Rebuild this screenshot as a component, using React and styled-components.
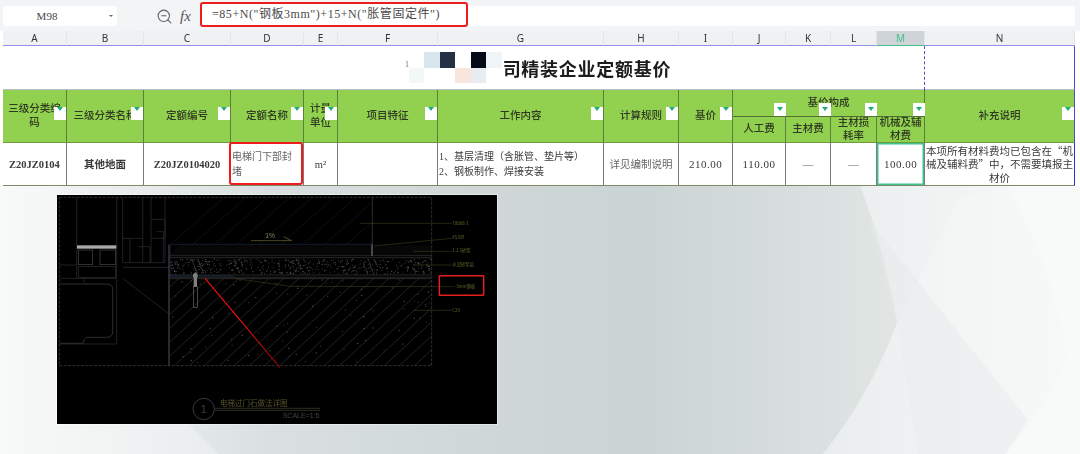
import React from "react";
import styled, { createGlobalStyle } from "styled-components";
import { ZoomOut } from "lucide-react";

const SONG = `"Liberation Serif", "Noto Sans CJK SC", serif`;
const COLUMNS = [
  ["A", 64], ["B", 77], ["C", 87], ["D", 73], ["E", 34], ["F", 100], ["G", 166],
  ["H", 75], ["I", 54], ["J", 53], ["K", 45], ["L", 46], ["M", 48], ["N", 150],
];
const TILES = [
  null, "#d8e6ee", "#243142", null, "#050a18", "#eef4f8",
  "#f5f8f8", null, null, "#f8e6dc", "#e8edf3", null,
];

const GlobalStyle = createGlobalStyle`
  html, body { margin: 0; padding: 0; background: #fff; }
  body { width: 1080px; height: 454px; overflow: hidden; font-family: ${SONG}; }
`;

const Page = styled.div`
  display: flex;
  flex-direction: column;
  width: 1080px;
  height: 454px;
  overflow: hidden;
`;

const Toolbar = styled.div`
  display: flex;
  align-items: flex-start;
  height: 31px;
  box-sizing: border-box;
  padding: 6px 5px 0 3px;
  background: #f3f4f6;
`;

const NameBox = styled.div`
  position: relative;
  width: 114px;
  height: 20px;
  box-sizing: border-box;
  padding-right: 26px;
  background: #fff;
  border-radius: 3px;
  font-size: 11px;
  line-height: 20px;
  text-align: center;
  color: #444;
`;

const Caret = styled.span`
  position: absolute;
  right: 4px;
  top: 9px;
  width: 0;
  height: 0;
  border: 2px solid transparent;
  border-top: 2px solid #666;
`;

const ToolIcons = styled.div`
  display: flex;
  align-items: center;
  gap: 7px;
  width: 83px;
  height: 20px;
  box-sizing: border-box;
  padding-left: 39px;
  color: #5c6066;
`;

const Fx = styled.span`
  font: italic 15px "Liberation Serif", serif;
  color: #555;
`;

const FormulaBar = styled.div`
  flex: 1;
  height: 20px;
  background: #fff;
`;

const Formula = styled.div`
  width: 268px;
  height: 25px;
  margin-top: -4px;
  box-sizing: border-box;
  padding-left: 10px;
  border: 2px solid #ee1c1c;
  border-radius: 3px;
  font-size: 12px;
  letter-spacing: 0.55px;
  line-height: 20px;
  color: #4a4a4a;
  white-space: nowrap;
  background: #fff;
`;

const Sheet = styled.table`
  table-layout: fixed;
  width: 1072px;
  margin-left: 3px;
  border-collapse: separate;
  border-spacing: 0;
  flex: none;
  background: #fff;
  filter: blur(0.25px);
`;

const Letter = styled.th`
  height: 15px;
  padding: 0;
  box-sizing: border-box;
  border-bottom: 1px solid ${(p) => (p.$active ? "#3ec48a" : "#8f8fe6")};
  border-right: 1px solid #e4e5e8;
  background: ${(p) => (p.$active ? "#cfd4d8" : "#f0f1f3")};
  font: 400 10px "Noto Sans", sans-serif;
  color: ${(p) => (p.$active ? "#3ec48a" : "#333")};
`;

const TitleCell = styled.td`
  position: relative;
  height: 44px;
  padding: 0;
  box-sizing: border-box;
  border-bottom: 1px solid #bdbdc9;
  border-right: 1px solid #4a4ad0;
`;

const TitleRow = styled.div`
  display: flex;
  align-items: center;
  justify-content: center;
  padding-left: 3px;
`;

const Mosaic = styled.div`
  position: relative;
  display: grid;
  grid-template-columns: repeat(6, 15.5px);
  grid-auto-rows: 15.5px;
  margin-right: 1px;
`;

const Tile = styled.i`
  background: ${(p) => p.$color || "transparent"};
`;

const Stray = styled.span`
  position: absolute;
  left: -4px;
  top: 7px;
  font-size: 9px;
  color: #8a8078;
`;

const TitleText = styled.span`
  font-size: 18px;
  font-weight: 700;
  letter-spacing: 0.75px;
  color: #1c1c1c;
  white-space: nowrap;
`;

const PageBreak = styled.i`
  position: absolute;
  left: 921px;
  top: 0;
  bottom: -1px;
  border-left: 1px dashed #5252d8;
`;

const HeadCell = styled.td`
  position: relative;
  padding: 0 2px;
  box-sizing: border-box;
  height: ${(p) => (p.$sub ? 26 : 27)}px;
  background: #92d050;
  border-right: 1px solid ${(p) => (p.$last ? "#4a4ad0" : "#5d7f3c")};
  border-bottom: 1px solid #6f9a3e;
  font-size: 10.5px;
  font-weight: 500;
  line-height: ${(p) => (p.$sub ? "12.5px" : "14px")};
  text-align: center;
  color: #2f3a22;
`;

const GroupCell = styled(HeadCell)`
  border-bottom-color: #4f7035;
  vertical-align: top;
  padding-top: 6px;
`;

const Filter = styled.span`
  display: block;
  width: 12px;
  height: 13px;
  background: #fff;
  &::after {
    content: "";
    display: block;
    width: 0;
    height: 0;
    margin: 4px auto 0;
    border-left: 3.5px solid transparent;
    border-right: 3.5px solid transparent;
    border-top: 4px solid #1fae78;
  }
`;

const CornerFilter = styled.span`
  position: absolute;
  top: 13px;
  right: 0;
`;

const GroupFilters = styled.div`
  position: absolute;
  inset: 13px 0 auto 0;
  display: grid;
  grid-template-columns: 53px 45px 46px 48px;
  justify-items: end;
`;

const Cell = styled.td`
  position: relative;
  height: 43px;
  padding: 0 ${(p) => (p.$note ? "0" : p.$align === "left" ? "1px" : "2px")};
  box-sizing: border-box;
  background: #fff;
  border-right: 1px solid ${(p) => (p.$last ? "#3030c8" : "#7a7a7a")};
  border-bottom: 1px solid #7d8a66;
  font-size: ${(p) => (p.$align === "left" ? "10px" : "10.5px")};
  font-weight: ${(p) => (p.$bold ? 600 : 400)};
  line-height: ${(p) => (p.$note ? "13.5px" : "15px")};
  font-family: ${(p) => (p.$note ? `"Noto Sans CJK SC", sans-serif` : SONG)};
  text-align: ${(p) => p.$align || "center"};
  color: ${(p) => (p.$muted ? "#666" : "#3a3a3a")};
  box-shadow: ${(p) => (p.$selected ? "inset 0 0 0 1.5px #3ec48a" : "none")};
`;

const Code = styled.span`
  font: 700 10.5px "Liberation Serif", serif;
`;

const Price = styled.span`
  font: 400 11px "Liberation Serif", serif;
  letter-spacing: 0.5px;
`;

const RedMark = styled.i`
  position: absolute;
  inset: -1px 0 0 -2px;
  border: 2px solid #ee1c1c;
  border-radius: 3px;
`;

const Stage = styled.div`
  position: relative;
  flex: 1;
  padding: 9px 0 0 57px;
`;

const Backdrop = styled.svg`
  position: absolute;
  inset: 0;
  width: 100%;
  height: 100%;
`;

const DrawingFrame = styled.svg`
  position: relative;
  display: block;
  width: 440px;
  height: 229px;
  background: #000;
  box-shadow: 0 0 0 1px rgba(255, 255, 255, 0.45);
  filter: blur(0.4px);
`;

// cheap repeatable noise for the aggregate speckle
const speckle = (count, x0, y0, w, h, seed) => {
  let s = seed;
  const next = () => {
    s = (s * 9301 + 49297) % 233280;
    return s / 233280;
  };
  let d = "";
  for (let i = 0; i < count; i++) {
    d += `M${Math.round(x0 + next() * w)} ${Math.round(y0 + next() * h)}h${next() > 0.7 ? 4 : 2.5}`;
  }
  return d;
};

const range = (from, to, step) => {
  const out = [];
  for (let v = from; v <= to; v += step) out.push(v);
  return out;
};

const LABELS = [
  { y: 104, x: 1207, text: "T8868-3" },
  { y: 148, x: 1207, text: "45309" },
  { y: 187, x: 1207, text: "1:2.5砂浆" },
  { y: 228, x: 1207, text: "水泥砂浆层" },
  { y: 293, x: 1207, text: "—3mm钢板" },
  { y: 365, x: 1207, text: "C20" },
];

const Drawing = () => (
  <DrawingFrame viewBox="21 15 1320 687">
    <defs>
      <clipPath id="slab"><rect x="358" y="265" width="787" height="262" /></clipPath>
      <clipPath id="upper"><rect x="358" y="22" width="608" height="140" /></clipPath>
      <clipPath id="band"><rect x="358" y="166" width="787" height="30" /></clipPath>
      <linearGradient id="pointer" gradientUnits="userSpaceOnUse" x1="465" y1="265" x2="690" y2="533">
        <stop offset="0.45" stopColor="#f01010" />
        <stop offset="1" stopColor="#8a0000" />
      </linearGradient>
    </defs>

    <g clipPath="url(#upper)" stroke="#181818" strokeWidth="2">
      {range(360, 1200, 66).map((x) => <line key={x} x1={x} y1="165" x2={x + 170} y2="15" />)}
    </g>
    <g clipPath="url(#band)" stroke="#242424" strokeWidth="1.5">
      {range(360, 1200, 8).map((x) => <line key={x} x1={x} y1="198" x2={x + 32} y2="164" />)}
    </g>
    <g clipPath="url(#slab)" stroke="#333" strokeWidth="2">
      {range(100, 1300, 45).map((x) => <line key={x} x1={x} y1="530" x2={x + 290} y2="262" />)}
    </g>
    <path d={speckle(520, 360, 207, 785, 46, 7)} stroke="#6a6a6a" strokeWidth="2" fill="none" />
    <path d={speckle(90, 362, 270, 780, 252, 31)} stroke="#5e5e5e" strokeWidth="2.5" fill="none" />

    <g fill="none" stroke="#303030" strokeWidth="2">
      <rect x="28" y="22" width="1117" height="505" strokeDasharray="9 4" stroke="#444" />
      <path d="M80 22V265M200 22V265M28 225H80M28 265H200M218 22V218M278 22V218M303 22V218M345 22V218M218 218H345M218 232H357" />
      <path d="M303 88H345V145H303M218 145H278M240 145V218M265 170H300V218M320 125H340V218" />
      <path d="M218 265L355 370" />
      <rect x="85" y="180" width="43" height="44" stroke="#484848" />
      <rect x="150" y="180" width="47" height="44" stroke="#484848" />
      <rect x="85" y="230" width="112" height="32" />
      <path d="M28 282H170Q188 282 188 298V425Q188 442 170 442H112Q100 444 100 460H28" stroke="#444" />
      <path d="M200 265V462H28M100 265Q100 280 112 282" />
      <path d="M358 197H1145M358 203H1145M358 255H1145M358 262H1145M358 266H1145" stroke="#3a3a3a" />
      <path d="M358 163H966" stroke="#1e2c48" />
      <path d="M358 258H550" stroke="#1e2c48" strokeWidth="3" />
      <path d="M967 22V163" stroke="#3a4448" />
      <path d="M966 163V197" stroke="#5c6c78" strokeWidth="4" />
      <path d="M357 165V527" stroke="#4a5656" strokeWidth="3" />
      <path d="M360 165V262" stroke="#1e2c48" />
      <rect x="430" y="290" width="12" height="62" stroke="#6a6a6a" />
    </g>
    <rect x="81" y="166" width="118" height="10" fill="#a8a8a8" />
    <path d="M429 254L436 246L443 254V262H441V290H431V262H429Z" fill="#808080" />

    <g fill="none" stroke="#3a3a1c" strokeWidth="2">
      <path d="M930 100H1205M972 168L1205 145M1090 184H1205M1090 225H1205M550 265L720 289L1205 290M1090 361H1205" />
      <path d="M603 152H725L700 140" stroke="#6c6c38" />
    </g>
    {LABELS.map((l) => (
      <text key={l.y} x={l.x} y={l.y} fontSize="13" fill="#66662c" fontFamily="'Noto Sans CJK SC', sans-serif">{l.text}</text>
    ))}
    <text x="646" y="143" fontSize="20" fill="#8a8a58" fontFamily="'Liberation Sans', sans-serif">1%</text>

    <line x1="465" y1="265" x2="690" y2="533" stroke="url(#pointer)" strokeWidth="3.5" />
    <rect x="1168" y="257" width="133" height="59" fill="none" stroke="#e61e1e" strokeWidth="4.5" rx="2" />

    <circle cx="461" cy="657" r="32" fill="none" stroke="#444" strokeWidth="2.5" />
    <text x="461" y="670" fontSize="34" textAnchor="middle" fill="#3c3c3c" fontFamily="'Liberation Sans', sans-serif">1</text>
    <path d="M495 655H810M495 661H810" stroke="#44443a" strokeWidth="2" />
    <text x="510" y="647" fontSize="22.5" fill="#56562c" fontFamily="'Noto Sans CJK SC', sans-serif">电梯过门石做法详图</text>
    <text x="698" y="685" fontSize="21" fill="#444" fontFamily="'Liberation Sans', sans-serif">SCALE=1:5</text>
  </DrawingFrame>
);

const Wallpaper = () => (
  <Backdrop viewBox="0 186 1080 268" preserveAspectRatio="none">
    <defs>
      <linearGradient id="wash" x1="0" x2="1" y1="0" y2="0">
        <stop offset="0" stopColor="#f5f7f7" />
        <stop offset="0.09" stopColor="#edf0f0" />
        <stop offset="0.25" stopColor="#dae0e1" />
        <stop offset="0.47" stopColor="#ced6d6" />
        <stop offset="0.6" stopColor="#cbd4d4" />
        <stop offset="0.72" stopColor="#d6dddc" />
        <stop offset="0.82" stopColor="#e0e5e4" />
      </linearGradient>
      <linearGradient id="fade" x1="0" x2="1" y1="0" y2="0">
        <stop offset="0" stopColor="#e9eded" />
        <stop offset="1" stopColor="#f9fafa" />
      </linearGradient>
    </defs>
    <rect x="0" y="186" width="1080" height="268" fill="url(#wash)" />
    <path d="M0 186H60L190 425L218 454H0Z" fill="#fff" opacity="0.3" />
    <path d="M860 186Q885 250 897 323Q870 395 823 454H1080V186Z" fill="url(#fade)" />
    <path d="M897 323L960 197L1007 186H1080V454H918Z" fill="#f5f7f7" opacity="0.5" />
    <path d="M1007 186Q1050 260 1068 357Q1045 410 1005 454H1080V186Z" fill="#fafbfb" opacity="0.55" />
    <path d="M869 220L1028 420L1005 454H918L897 323Z" fill="#e4e8e8" opacity="0.45" />
  </Backdrop>
);

const HEADERS = [
  <>三级分类编<br />码</>,
  "三级分类名称",
  "定额编号",
  "定额名称",
  <>计量<br />单位</>,
  "项目特征",
  "工作内容",
  "计算规则",
  "基价",
];

const App = () => (
  <Page>
    <GlobalStyle />
    <Toolbar>
      <NameBox>M98<Caret /></NameBox>
      <ToolIcons>
        <ZoomOut size={17} strokeWidth={1.5} />
        <Fx>fx</Fx>
      </ToolIcons>
      <FormulaBar>
        <Formula>=85+N("钢板3mm")+15+N("胀管固定件")</Formula>
      </FormulaBar>
    </Toolbar>

    <Sheet>
      <colgroup>
        {COLUMNS.map(([name, width]) => <col key={name} style={{ width }} />)}
      </colgroup>
      <thead>
        <tr>
          {COLUMNS.map(([name]) => <Letter key={name} $active={name === "M"}>{name}</Letter>)}
        </tr>
      </thead>
      <tbody>
        <tr>
          <TitleCell colSpan={14}>
            <TitleRow>
              <Mosaic>
                <Stray>1</Stray>
                {TILES.map((color, i) => <Tile key={i} $color={color} />)}
              </Mosaic>
              <TitleText>司精装企业定额基价</TitleText>
            </TitleRow>
            <PageBreak />
          </TitleCell>
        </tr>
        <tr>
          {HEADERS.map((text, i) => (
            <HeadCell key={i} rowSpan={2}>
              {text}
              <CornerFilter><Filter /></CornerFilter>
            </HeadCell>
          ))}
          <GroupCell colSpan={4}>
            基价构成
            <GroupFilters>
              <Filter /><Filter /><Filter /><Filter />
            </GroupFilters>
          </GroupCell>
          <HeadCell rowSpan={2} $last>
            补充说明
            <CornerFilter><Filter /></CornerFilter>
          </HeadCell>
        </tr>
        <tr>
          <HeadCell $sub>人工费</HeadCell>
          <HeadCell $sub>主材费</HeadCell>
          <HeadCell $sub>主材损<br />耗率</HeadCell>
          <HeadCell $sub>机械及辅<br />材费</HeadCell>
        </tr>
        <tr>
          <Cell $bold><Code>Z20JZ0104</Code></Cell>
          <Cell $bold>其他地面</Cell>
          <Cell $bold><Code>Z20JZ0104020</Code></Cell>
          <Cell $align="left" $muted>
            电梯门下部封<br />堵
            <RedMark />
          </Cell>
          <Cell>m²</Cell>
          <Cell />
          <Cell $align="left">1、基层清理（含胀管、垫片等）<br />2、钢板制作、焊接安装</Cell>
          <Cell $muted>详见编制说明</Cell>
          <Cell><Price>210.00</Price></Cell>
          <Cell><Price>110.00</Price></Cell>
          <Cell $muted>—</Cell>
          <Cell $muted>—</Cell>
          <Cell $selected><Price>100.00</Price></Cell>
          <Cell $last $note>本项所有材料费均已包含在“机械及辅料费”中，不需要填报主材价</Cell>
        </tr>
      </tbody>
    </Sheet>

    <Stage>
      <Wallpaper />
      <Drawing />
    </Stage>
  </Page>
);

export default App;
